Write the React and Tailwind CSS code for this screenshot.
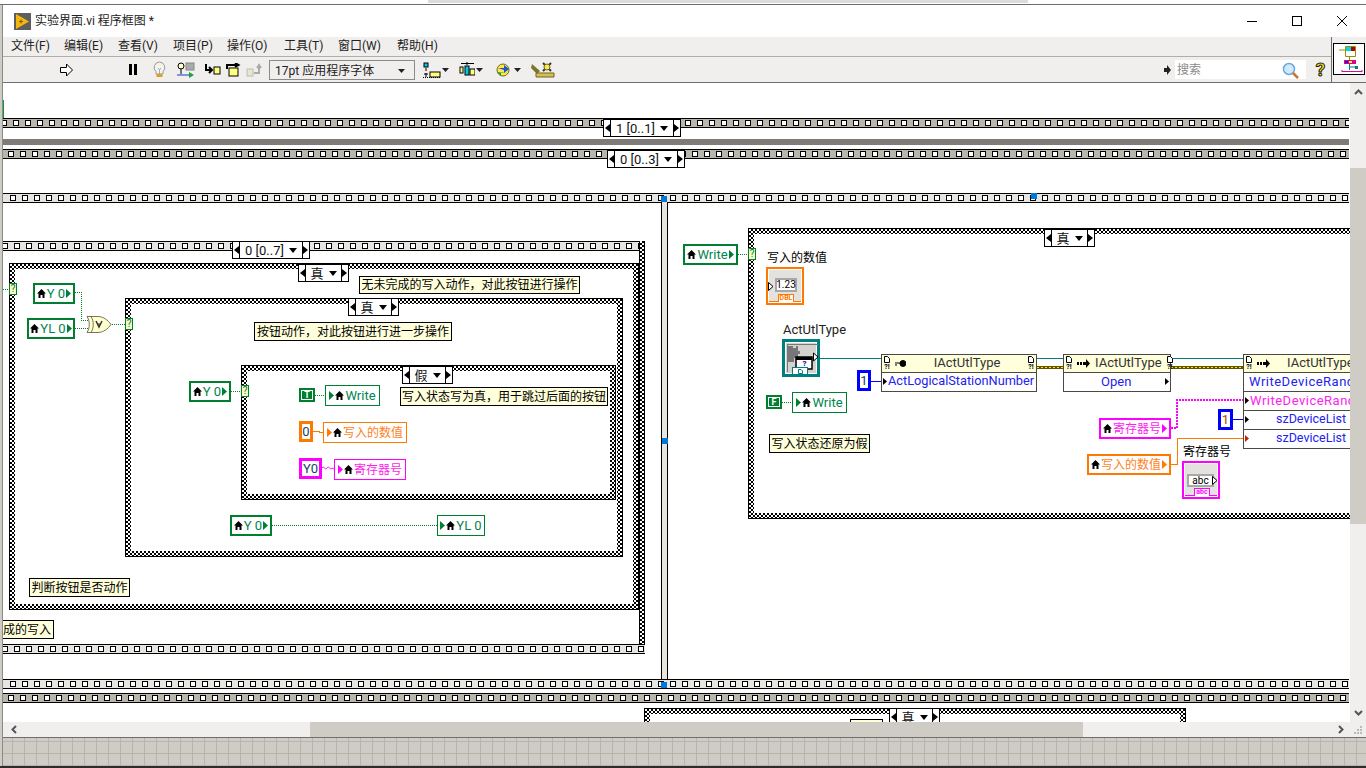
import React from 'react';

const CJK = "font-['Roboto','Noto_Sans_CJK_SC',sans-serif]";
const squares = Array.from({ length: 116 });

function Strip({ className, dark }) {
  return (
    <div className={`absolute h-[10px] border-y border-black flex items-center overflow-hidden ${dark ? 'bg-[#b9b4ac]' : 'bg-[#e6e5e1]'} ${className}`}>
      {squares.map((_, i) => (
        <div key={i} className="w-[6px] h-[6px] border border-black bg-white shrink-0 mr-[6px]" />
      ))}
    </div>
  );
}

function Struct({ className }) {
  return (
    <div className={`absolute border border-black p-[5px] bg-[conic-gradient(#000_25%,#fff_0_50%,#000_0_75%,#fff_0)] bg-[length:4px_4px] ${className}`}>
      <div className="w-full h-full bg-white" />
    </div>
  );
}

function Selector({ className, children }) {
  return (
    <div className={`absolute h-[18px] border border-black bg-white flex items-stretch ${className}`}>
      <div className="w-[7px] border-r border-black flex items-center justify-center shrink-0">
        <svg width="6" height="8"><path d="M6 0V8L1 4Z" fill="#000" /></svg>
      </div>
      <div className="flex-1 flex items-center justify-center gap-[5px] text-[13px] leading-none text-[#111] whitespace-nowrap">
        <span>{children}</span>
        <svg width="8" height="5"><path d="M0 0H8L4 5Z" fill="#000" /></svg>
      </div>
      <div className="w-[7px] border-l border-black flex items-center justify-center shrink-0">
        <svg width="6" height="8"><path d="M0 0V8L5 4Z" fill="#000" /></svg>
      </div>
    </div>
  );
}

function Note({ className, children }) {
  return (
    <div className={`absolute border border-black bg-[#ffffdc] text-[12px] leading-none text-black flex items-center justify-center whitespace-nowrap overflow-hidden ${className}`}>
      {children}
    </div>
  );
}

function House() {
  return (
    <svg width="9" height="9" className="shrink-0">
      <path d="M4.5 0L9 4.5H7.5V9H5.5V6H3.5V9H1.5V4.5H0Z" fill="#000" />
    </svg>
  );
}

const palette = {
  green: { border: 'border-[#007f2f]', text: 'text-[#00864e]', fill: '#007f2f' },
  orange: { border: 'border-[#ff7800]', text: 'text-[#ff7f1e]', fill: '#ff7800' },
  pink: { border: 'border-[#ff00ff]', text: 'text-[#ff22ee]', fill: '#ff00ff' },
};

function Local({ className, color, read, cjk, children }) {
  const c = palette[color];
  const arrow = (
    <svg width="5" height="9" className="shrink-0">
      <path d="M0 0L5 4.5L0 9Z" fill={c.fill} />
    </svg>
  );
  return (
    <div className={`absolute bg-white flex items-center justify-center gap-[1px] whitespace-nowrap leading-none ${read ? 'border-[2px]' : 'border'} ${c.border} ${c.text} ${cjk ? 'text-[12px]' : 'text-[13px]'} ${className}`}>
      {!read && arrow}
      <House />
      <span>{children}</span>
      {read && arrow}
    </div>
  );
}

function Term({ className }) {
  return (
    <div className={`absolute w-[8px] h-[12px] bg-[#f8f8c4] border border-[#007f2f] text-[#007f2f] text-[10px] leading-none flex items-center justify-center ${className}`}>
      ?
    </div>
  );
}

function Bool({ className, children }) {
  return (
    <div className={`absolute w-[16px] h-[14px] bg-[#007f2f] p-[2px] ${className}`}>
      <div className="w-full h-full border border-white text-white text-[9px] font-bold leading-none flex items-center justify-center">
        {children}
      </div>
    </div>
  );
}

function Const({ className, border, children }) {
  return (
    <div className={`absolute bg-white border-[3px] text-[13px] leading-none text-[#1a3f66] flex items-center justify-center ${border} ${className}`}>
      {children}
    </div>
  );
}

function Doc() {
  return (
    <svg width="6" height="7" className="shrink-0">
      <path d="M0.5 0.5H3.5L5.5 2.5V6.5H0.5Z" fill="#fff" stroke="#000" />
    </svg>
  );
}

function Corner() {
  return (
    <div className="flex flex-col items-center gap-[1px] shrink-0">
      <Doc />
      <span className="text-[7px] leading-[7px] font-bold text-black">?!</span>
    </div>
  );
}

function NodeHead({ mark, align, children }) {
  return (
    <div className="h-[18px] bg-[#ffffdc] border-b border-[#4a4a40] flex items-center gap-[5px] px-[2px] text-[13px] leading-none text-[#333] whitespace-nowrap">
      <Corner />
      {mark}
      <span className={`flex-1 pb-[2px] ${align}`}>{children}</span>
      <Corner />
    </div>
  );
}

function Key() {
  return (
    <svg width="11" height="7" className="shrink-0">
      <path d="M0 3H7M0 5H2M8 0.5A3 3 0 1 1 7.9 6.5A3 3 0 1 1 8 0.5Z" fill="#000" stroke="#000" />
    </svg>
  );
}

function Invoke() {
  return (
    <svg width="13" height="9" className="shrink-0">
      <rect x="0" y="3" width="2" height="3" fill="#000" />
      <rect x="3" y="3" width="2" height="3" fill="#000" />
      <path d="M6 3H9V0L13 4.5L9 9V6H6Z" fill="#000" />
    </svg>
  );
}

function Mark({ color = '#000' }) {
  return (
    <svg width="4" height="7" className="shrink-0"><path d="M0 0L4 3.5L0 7Z" fill={color} /></svg>
  );
}

function Indicator({ className, border, lineBg, tag, tagText, display, arrowLeft }) {
  return (
    <div className={`absolute w-[38px] h-[38px] bg-white border-2 p-[1px] ${border} ${className}`}>
      <div className="relative w-full h-full bg-[#e4e2de]">
        <div className={`absolute left-0 right-0 bottom-0 h-[1px] ${lineBg}`} />
        <div className={`absolute bg-white border-2 border-[#a8a8a8] text-[10px] leading-none text-black flex items-center justify-center ${arrowLeft ? 'left-[6px] top-[8px] w-[22px] h-[14px]' : 'left-[2px] top-[10px] w-[27px] h-[13px]'}`}>
          {display}
        </div>
        <svg width="6" height="9" className={`absolute top-[12px] ${arrowLeft ? 'left-[-1px]' : 'right-[-1px]'}`}>
          <path d="M0.5 0.5L5 4.5L0.5 8.5Z" fill="#fff" stroke="#000" />
        </svg>
        <div className={`absolute left-[9px] bottom-0 w-[16px] h-[8px] bg-white border border-b-0 text-[7px] leading-none font-bold flex items-center justify-center overflow-hidden ${border} ${tagText}`}>
          {tag}
        </div>
      </div>
    </div>
  );
}

function Wires() {
  const dot = { fill: 'none', stroke: '#007f2f', strokeDasharray: '1 1', shapeRendering: 'crispEdges' };
  const solid = { fill: 'none', shapeRendering: 'crispEdges' };
  return (
    <svg width="1366" height="768" className="absolute left-0 top-0">
      <path d="M3 289.5H9" {...dot} />
      <path d="M75 292.5H81.5V320.5H88" {...dot} />
      <path d="M75 328.5H90" {...dot} />
      <path d="M110 324.5H125" {...dot} />
      <path d="M231 391.5H241" {...dot} />
      <path d="M315 395.5H325" {...dot} />
      <path d="M272 525.5H437" {...dot} />
      <path d="M738 254.5H748" {...dot} />
      <path d="M782 402.5H792" {...dot} />
      <path d="M313 431.5H319.5V432.5H323" stroke="#ff7800" {...solid} />
      <path d="M322 468C324 465 325 471 327 468C329 465 330 471 332 468L334 469" fill="none" stroke="#ff00ff" />
      <path d="M820 358.5H881M1037 358.5H1063M1171 358.5H1243" stroke="#007f7f" {...solid} />
      <path d="M1037 367.5H1063M1171 367.5H1243" stroke="#5c5600" strokeWidth="3" {...solid} />
      <path d="M1037 367.5H1063M1171 367.5H1243" stroke="#ffe800" strokeDasharray="2 2" {...solid} />
      <path d="M871 381.5H881" stroke="#0000ff" {...solid} />
      <path d="M1233 419.5H1243" stroke="#0000ff" {...solid} />
      <path d="M1171 428H1177V400H1243" fill="none" stroke="#ff00ff" strokeWidth="2" strokeDasharray="2 1" shapeRendering="crispEdges" />
      <path d="M1171 464.5H1177.5V438.5H1243" stroke="#ff7800" {...solid} />
      <path d="M87 316.5H98C103 316.5 108 320 111 324.5C108 329 103 332.5 98 332.5H87C90 328 90 321 87 316.5Z" fill="#ffffd0" stroke="#77725a" />
      <path d="M91 316.5C94 321 94 328 91 332.5" fill="none" stroke="#77725a" />
      <path d="M96 321L99 327L102 321" fill="none" stroke="#333" strokeWidth="1.5" />
      <path d="M97 324H101" stroke="#333" />
    </svg>
  );
}

function Handle({ className }) {
  return <div className={`absolute w-[6px] h-[6px] bg-[#0078d7] ${className}`} />;
}

function ActIcon() {
  return (
    <div className="absolute left-[782px] top-[339px] w-[38px] h-[38px] bg-[#007f7f] p-[3px]">
      <div className="relative w-full h-full bg-[#d4d2ce] border border-white">
        <svg width="34" height="32" className="absolute left-[-1px] top-[-1px]">
          <path d="M2 2.5H33" stroke="#77777a" />
          <path d="M2.5 2V30" stroke="#77777a" />
          <path d="M2 4H8V6H11V4H13V9H15V12H13V16H9V20H2Z" fill="#77777a" />
          <rect x="11" y="15" width="16" height="12" fill="#fff" stroke="#000" strokeWidth="1.5" />
          <rect x="11" y="15" width="16" height="3" fill="#000" />
          <path d="M28.5 11L33 15L28.5 19Z" fill="#fff" stroke="#000" />
        </svg>
        <div className="absolute left-[14px] top-[17px] w-[9px] h-[8px] text-[8px] font-bold leading-none text-[#000090] flex items-center justify-center">?</div>
        <div className="absolute left-[6px] bottom-[-2px] w-[16px] h-[8px] bg-white border border-[#007f7f] flex items-center justify-center">
          <svg width="5" height="5"><path d="M0.5 0.5H3L4.5 2V4.5H0.5Z" fill="none" stroke="#007f7f" /></svg>
        </div>
      </div>
    </div>
  );
}

function Diagram() {
  return (
    <div className="absolute left-[-3px] top-[-83px] w-[1366px] h-[768px]">
      <div className="absolute left-[3px] top-[100px] w-[1px] h-[18px] bg-[#0a9a30]" />
      <Strip dark className="left-0 top-[118px] w-[1349px] pl-[1px]" />
      <div className="absolute left-0 top-[139px] w-[1349px] h-[6px] bg-[#7f7b78]" />
      <Strip dark className="left-0 top-[149px] w-[1349px] pl-[8px]" />
      <Strip className="left-0 top-[193px] w-[1349px] pl-[10px]" />
      <Selector className="left-[603px] top-[119px] w-[78px]">1 [0..1]</Selector>
      <Selector className="left-[607px] top-[150px] w-[78px]">0 [0..3]</Selector>

      <div className="absolute left-[661px] top-[202px] w-[7px] h-[478px] bg-[#e6e5e1] border-x border-black" />

      <Strip className="left-0 top-[241px] w-[645px] pl-[2px]" />
      <div className="absolute left-[639px] top-[241px] w-[6px] h-[413px] border-x border-black bg-[conic-gradient(#000_25%,#fff_0_50%,#000_0_75%,#fff_0)] bg-[length:4px_4px]" />
      <Strip className="left-0 top-[644px] w-[645px] pl-[2px]" />
      <Selector className="left-[232px] top-[241px] w-[78px]">0 [0..7]</Selector>

      <Struct className="left-[9px] top-[263px] w-[630px] h-[347px]" />
      <Struct className="left-[125px] top-[298px] w-[498px] h-[259px]" />
      <Struct className="left-[241px] top-[365px] w-[375px] h-[135px]" />
      <Struct className="left-[748px] top-[228px] w-[700px] h-[291px]" />
      <Struct className="left-[644px] top-[708px] w-[542px] h-[60px]" />

      <Strip className="left-0 top-[679px] w-[1349px] pl-[10px]" />
      <Strip dark className="left-0 top-[693px] w-[1349px] pl-[8px]" />

      <Handle className="left-[661px] top-[196px]" />
      <Handle className="left-[1031px] top-[193px]" />
      <Handle className="left-[662px] top-[438px]" />
      <Handle className="left-[661px] top-[682px]" />

      <Selector className="left-[298px] top-[264px] w-[51px]">真</Selector>
      <Selector className="left-[348px] top-[298px] w-[51px]">真</Selector>
      <Selector className="left-[402px] top-[366px] w-[51px]">假</Selector>
      <Selector className="left-[1044px] top-[229px] w-[51px]">真</Selector>
      <Selector className="left-[889px] top-[708px] w-[51px]">真</Selector>

      <Note className="left-[359px] top-[276px] w-[221px] h-[18px]">无未完成的写入动作，对此按钮进行操作</Note>
      <Note className="left-[254px] top-[322px] w-[198px] h-[19px]">按钮动作，对此按钮进行进一步操作</Note>
      <Note className="left-[400px] top-[387px] w-[208px] h-[19px]">写入状态写为真，用于跳过后面的按钮</Note>
      <Note className="left-[29px] top-[578px] w-[101px] h-[19px]">判断按钮是否动作</Note>
      <Note className="left-[-10px] top-[620px] w-[64px] h-[19px] !justify-end pr-[2px]">成的写入</Note>
      <Note className="left-[769px] top-[434px] w-[101px] h-[19px]">写入状态还原为假</Note>
      <Note className="left-[850px] top-[719px] w-[33px] h-[19px]"> </Note>

      <Wires />

      <Term className="left-[9px] top-[283px]" />
      <Term className="left-[125px] top-[318px]" />
      <Term className="left-[241px] top-[385px]" />
      <Term className="left-[748px] top-[248px]" />

      <Local read color="green" className="left-[33px] top-[283px] w-[42px] h-[21px]">Y 0</Local>
      <Local read color="green" className="left-[27px] top-[318px] w-[48px] h-[21px]">YL 0</Local>
      <Local read color="green" className="left-[189px] top-[381px] w-[42px] h-[21px]">Y 0</Local>
      <Local read color="green" className="left-[230px] top-[515px] w-[42px] h-[21px]">Y 0</Local>
      <Local color="green" className="left-[437px] top-[515px] w-[48px] h-[21px]">YL 0</Local>
      <Local color="green" className="left-[325px] top-[385px] w-[55px] h-[21px]">Write</Local>
      <Local color="orange" cjk className="left-[323px] top-[422px] w-[84px] h-[21px]">写入的数值</Local>
      <Local color="pink" cjk className="left-[334px] top-[459px] w-[72px] h-[21px]">寄存器号</Local>

      <Bool className="left-[299px] top-[388px]">T</Bool>
      <Const border="border-[#ff7800]" className="left-[299px] top-[421px] w-[14px] h-[21px]">0</Const>
      <Const border="border-[#ff00ff]" className="left-[299px] top-[458px] w-[23px] h-[21px]">Y0</Const>

      <Local read color="green" className="left-[683px] top-[244px] w-[55px] h-[21px]">Write</Local>
      <div className="absolute left-[767px] top-[251px] text-[12px] leading-[14px] text-black">写入的数值</div>
      <Indicator className="left-[766px] top-[267px]" border="border-[#ff7800]" lineBg="bg-[#ff7800]" tag="DBL" tagText="text-[#ff7800]" display="1.23" arrowLeft />

      <div className="absolute left-[783px] top-[322px] text-[13px] leading-[16px] text-[#222]">ActUtlType</div>
      <ActIcon />

      <Bool className="left-[766px] top-[395px]">F</Bool>
      <Local color="green" className="left-[792px] top-[392px] w-[55px] h-[21px]">Write</Local>

      <div className="absolute left-[881px] top-[354px] w-[156px] h-[38px] border border-[#4a4a40] bg-white flex flex-col">
        <NodeHead mark={<Key />} align="text-center">IActUtlType</NodeHead>
        <div className="flex-1 flex items-center gap-[1px] pl-[1px] pb-[1px] text-[12.75px] leading-none text-[#2222ee] whitespace-nowrap">
          <Mark />
          <span>ActLogicalStationNumber</span>
        </div>
      </div>
      <Const border="border-[#0000ff]" className="left-[857px] top-[370px] w-[14px] h-[21px]">1</Const>

      <div className="absolute left-[1063px] top-[354px] w-[108px] h-[38px] border border-[#4a4a40] bg-white flex flex-col">
        <NodeHead mark={<Invoke />} align="text-left">IActUtlType</NodeHead>
        <div className="flex-1 flex items-center justify-between pl-[37px] pr-[1px] pb-[1px] text-[13px] leading-none text-[#2222ee]">
          <span>Open</span>
          <Mark />
        </div>
      </div>

      <div className="absolute left-[1243px] top-[354px] w-[140px] h-[95px] border border-[#4a4a40] bg-white flex flex-col">
        <NodeHead mark={<Invoke />} align="text-left pl-[12px]">IActUtlType</NodeHead>
        <div className="h-[19px] border-b border-[#4a4a40] flex items-center pl-[5px] pb-[1px] text-[13px] tracking-[0.5px] leading-none text-[#2222ee] whitespace-nowrap">WriteDeviceRandom</div>
        <div className="h-[19px] border-b border-[#4a4a40] flex items-center gap-[1px] pl-[1px] pb-[1px] text-[13px] tracking-[0.5px] leading-none text-[#ff22ee] whitespace-nowrap"><Mark />WriteDeviceRandom</div>
        <div className="h-[19px] border-b border-[#4a4a40] flex items-center justify-between pl-[1px] pr-[36px] pb-[1px] text-[12.5px] leading-none text-[#2222ee] whitespace-nowrap"><Mark /><span>szDeviceList</span></div>
        <div className="flex-1 flex items-center justify-between pl-[1px] pr-[36px] pb-[1px] text-[12.5px] leading-none text-[#2222ee] whitespace-nowrap"><Mark color="#cc2200" /><span>szDeviceList</span></div>
      </div>

      <Local read color="pink" cjk className="left-[1099px] top-[418px] w-[72px] h-[21px]">寄存器号</Local>
      <Const border="border-[#0000ff]" className="left-[1218px] top-[409px] w-[15px] h-[21px] !text-[#a04a10]">1</Const>
      <Local read color="orange" cjk className="left-[1087px] top-[454px] w-[84px] h-[21px]">写入的数值</Local>
      <div className="absolute left-[1183px] top-[445px] text-[12px] leading-[14px] text-black">寄存器号</div>
      <Indicator className="left-[1182px] top-[461px]" border="border-[#ff00ff]" lineBg="bg-[#ff00ff]" tag="abc" tagText="text-[#ff00ff]" display="abc" />
    </div>
  );
}

function ToolIcons1() {
  return (
    <>
      <svg width="15" height="14" className="ml-[56px]"><path d="M1.5 4.5H7.5V1L13.5 7L7.5 13V9.5H1.5Z" fill="#fff" stroke="#000" /></svg>
      <svg width="12" height="11" className="ml-[53px]"><rect x="2" y="0" width="3" height="11" fill="#000" /><rect x="7" y="0" width="3" height="11" fill="#000" /></svg>
      <svg width="15" height="18" className="ml-[13px]">
        <path d="M7.5 1A5.5 5.5 0 0 1 11 10.6V13H4V10.6A5.5 5.5 0 0 1 7.5 1Z" fill="#f4f4ee" stroke="#9a9a94" />
        <path d="M6 7L7.5 9L9 7M7.5 9V13" fill="none" stroke="#aaa" />
        <rect x="4.5" y="13" width="6" height="3" fill="#d9a02c" />
      </svg>
      <svg width="18" height="17" className="ml-[10px]">
        <circle cx="4" cy="5" r="3" fill="#ffffd0" stroke="#000" />
        <path d="M4 8V13" stroke="#000" />
        <rect x="9" y="2" width="8" height="7" fill="#aaa" stroke="#888" />
        <path d="M0 14H12" stroke="#1a35d0" />
        <path d="M12 11L17 14L12 17Z" fill="#1aa040" />
      </svg>
      <svg width="17" height="12" className="ml-[9px]">
        <path d="M2 0V6H7M5 3L8 6L5 9" fill="none" stroke="#000" strokeWidth="2" />
        <rect x="10" y="3" width="6" height="7" fill="#ffff80" stroke="#000" />
      </svg>
      <svg width="16" height="14" className="ml-[5px]">
        <path d="M1 6V2H12M9 0L12.5 2L9 4" fill="none" stroke="#000" strokeWidth="2" />
        <rect x="3" y="5" width="9" height="8" fill="#ffff80" stroke="#000" />
      </svg>
      <svg width="17" height="14" className="ml-[4px]">
        <rect x="1" y="6" width="6" height="7" fill="#e8e8c8" stroke="#bbb" />
        <path d="M8 10H13V3M11 5L13 2L15 5" fill="none" stroke="#aaa" strokeWidth="2" />
      </svg>
    </>
  );
}

function Caret() {
  return <svg width="7" height="4" className="shrink-0"><path d="M0 0H7L3.5 4Z" fill="#222" /></svg>;
}

function ToolIcons2() {
  return (
    <>
      <div className="ml-[8px] w-[26px] flex items-center gap-[1px]">
        <svg width="19" height="16">
          <rect x="1" y="1" width="4" height="4" fill="#00c8e8" stroke="#000" />
          <path d="M3 6V9M1 12H5M3 11V15" stroke="#000" />
          <rect x="7" y="10" width="10" height="5" fill="#ffff80" stroke="#000" />
          <path d="M0 15.5H19" stroke="#000" strokeDasharray="1 1" />
        </svg>
        <Caret />
      </div>
      <div className="ml-[10px] w-[24px] flex items-center gap-[1px]">
        <svg width="17" height="16">
          <path d="M2 1.5H15M8 0V3" stroke="#000" />
          <rect x="1" y="5" width="3" height="6" fill="#ffff80" stroke="#000" />
          <rect x="6" y="4" width="4" height="9" fill="#00c8e8" stroke="#000" />
          <rect x="11" y="7" width="5" height="6" fill="#ffff80" stroke="#000" />
        </svg>
        <Caret />
      </div>
      <div className="ml-[12px] w-[26px] flex items-center gap-[1px]">
        <svg width="18" height="16">
          <circle cx="8" cy="8" r="6" fill="#ffe64a" stroke="#6a6a20" />
          <path d="M3 6H9V3L14 7L9 11V8" fill="#1a55d0" />
          <path d="M12 11H6V14L2 10" fill="#2a9a40" />
        </svg>
        <Caret />
      </div>
      <svg width="24" height="17" className="ml-[10px]">
        <path d="M1 3L9 10L6 13L0 7Z" fill="#7c7430" />
        <path d="M5 12H23V16H5Z" fill="#d8c050" stroke="#6c6420" />
        <path d="M12 2L20 10M20 2L12 10" stroke="#333" strokeWidth="2" />
        <circle cx="16" cy="6" r="3" fill="#fbe84c" stroke="#6c6420" />
      </svg>
    </>
  );
}

function ContextHelp() {
  return (
    <svg width="30" height="30">
      <path d="M5 6H12M11.5 2.5H21.5V12.5H11.5ZM15.5 12.5V16.5" fill="none" stroke="#a08a00" />
      <rect x="12" y="3" width="5" height="4" fill="#00d8e8" />
      <rect x="17" y="3" width="4" height="4" fill="#b00000" />
      <rect x="10" y="16" width="12" height="4" fill="#e0008a" />
      <rect x="11" y="17" width="3" height="2" fill="#1010e0" />
      <rect x="15" y="17" width="3" height="2" fill="#ffff20" />
      <path d="M15.5 20V26M16 23H22" stroke="#008080" fill="none" />
      <rect x="21" y="22" width="3" height="3" fill="#008080" />
      <path d="M8 27.5H28M8 26V28M28 26V28" stroke="#e000a0" fill="none" />
    </svg>
  );
}

export default function App() {
  return (
    <div className={`w-[1366px] h-[768px] overflow-hidden bg-[#cfccc6] flex flex-col relative ${CJK}`}>
      <div className="h-[5px] bg-white border-b border-[#6e6e6e] shrink-0 flex">
        <div className="ml-[428px] w-[600px] h-[3px] bg-[#dcdcdc]" />
      </div>
      <div className="flex-1 min-h-0 flex flex-col ml-[2px] border-l border-[#8a8a86]">
        <div className="h-[32px] bg-white flex items-center shrink-0 pl-[11px] text-[12px] leading-none text-[#222]">
          <svg width="17" height="17" className="shrink-0">
            <rect width="17" height="17" fill="#5e5e5e" />
            <path d="M2 1L15 8.5L2 16Z" fill="#f5b70f" />
            <path d="M5 8.5H9M7 6.5V10.5" stroke="#7a5a00" />
          </svg>
          <span className="ml-[4px]">实验界面.vi 程序框图 *</span>
          <div className="ml-auto flex items-center pr-[19px] gap-[35px]">
            <svg width="10" height="10"><path d="M0 5.5H10" stroke="#000" /></svg>
            <svg width="10" height="10"><rect x="0.5" y="0.5" width="9" height="9" fill="none" stroke="#000" /></svg>
            <svg width="10" height="10"><path d="M0 0L10 10M10 0L0 10" stroke="#000" /></svg>
          </div>
        </div>
        <div className="h-[46px] shrink-0 flex bg-[#f0efed] border-b border-[#6e6e6e]">
          <div className="flex-1 flex flex-col border-r border-[#6e6e6e]">
            <div className="h-[20px] border-b border-[#b0aeaa] flex items-center pl-[8px] pb-[2px] text-[12px] leading-none text-[#222]">
              <span className="w-[53px]">文件(F)</span>
              <span className="w-[54px]">编辑(E)</span>
              <span className="w-[55px]">查看(V)</span>
              <span className="w-[54px]">项目(P)</span>
              <span className="w-[57px]">操作(O)</span>
              <span className="w-[54px]">工具(T)</span>
              <span className="w-[59px]">窗口(W)</span>
              <span>帮助(H)</span>
            </div>
            <div className="flex-1 flex items-center">
              <ToolIcons1 />
              <div className="ml-[6px] w-[146px] h-[20px] border border-[#8a8a86] flex items-center justify-between pl-[5px] pr-[9px] pt-[2px] text-[12px] leading-none text-[#222]">
                <span>17pt 应用程序字体</span>
                <Caret />
              </div>
              <ToolIcons2 />
              <svg width="9" height="12" className="ml-auto"><path d="M0 4H3V1L7 6L3 11V8H0Z" fill="#222" /></svg>
              <div className="ml-[2px] w-[131px] h-[19px] bg-white flex items-center justify-between pl-[2px] pr-[7px] pt-[1px] text-[12px] leading-none text-[#8a8a8a]">
                <span>搜索</span>
                <svg width="17" height="17">
                  <circle cx="7" cy="7" r="5.5" fill="#cfeaff" stroke="#6fa6d8" strokeWidth="1.5" />
                  <path d="M11 11L16 16" stroke="#c9762a" strokeWidth="2.5" />
                </svg>
              </div>
              <span className="ml-[8px] mr-[4px] w-[13px] text-center text-[19px] leading-none font-bold text-[#f7e40b] [-webkit-text-stroke:1px_#222]">?</span>
            </div>
          </div>
          <div className="w-[34px] shrink-0 pl-[1px] pt-[6px]">
            <div className="w-[32px] h-[32px] bg-white border border-black">
              <ContextHelp />
            </div>
          </div>
        </div>
        <div className="h-[639px] shrink-0 flex">
          <div className="flex-1 relative overflow-hidden bg-white text-black">
            <Diagram />
          </div>
          <div className="w-[16px] shrink-0 bg-[#f0efed] flex flex-col">
            <div className="h-[85px] flex justify-center pt-[6px]">
              <svg width="9" height="6"><path d="M1 5L4.5 1.5L8 5" fill="none" stroke="#555" strokeWidth="2" /></svg>
            </div>
            <div className="h-[356px] bg-[#cfccc6]" />
            <div className="flex-1 flex justify-center items-end pb-[6px]">
              <svg width="9" height="6"><path d="M1 1L4.5 4.5L8 1" fill="none" stroke="#555" strokeWidth="2" /></svg>
            </div>
          </div>
        </div>
        <div className="h-[16px] shrink-0 flex bg-[#f0efed] border-b border-[#6e6e6e]">
          <div className="w-[307px] flex items-center pl-[8px]">
            <svg width="6" height="9"><path d="M5 1L1.5 4.5L5 8" fill="none" stroke="#555" strokeWidth="2" /></svg>
          </div>
          <div className="w-[773px] bg-[#cfccc6]" />
          <div className="flex-1 flex items-center justify-end pr-[4px] gap-[9px]">
            <svg width="6" height="9"><path d="M1 1L4.5 4.5L1 8" fill="none" stroke="#555" strokeWidth="2" /></svg>
            <svg width="9" height="9"><path d="M7 1H9V3H7ZM4 4H6V6H4ZM7 4H9V6H7ZM1 7H3V9H1ZM4 7H6V9H4ZM7 7H9V9H7Z" fill="#bdbab4" /></svg>
          </div>
        </div>
        <div className="flex-1 bg-[#cfccc6] bg-[linear-gradient(#b8b4ad_1px,transparent_1px),linear-gradient(90deg,#b8b4ad_1px,transparent_1px)] bg-[length:12px_12px] bg-[position:9px_3px]" />
      </div>
      <div className="h-[2px] bg-[#2c2c2c] shrink-0" />
    </div>
  );
}
